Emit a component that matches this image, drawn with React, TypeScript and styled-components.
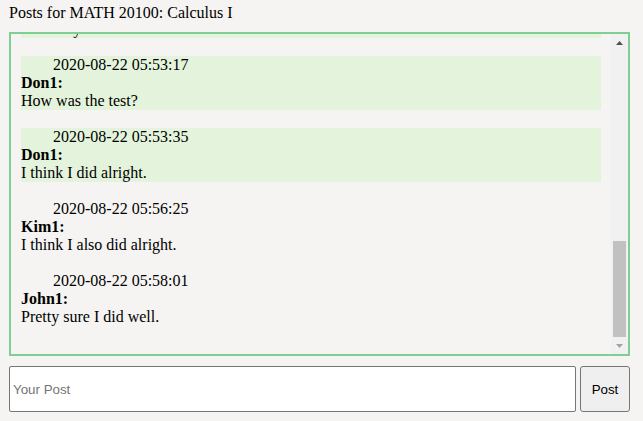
import React, { useLayoutEffect, useRef } from "react";
import styled, { createGlobalStyle } from "styled-components";

const Global = createGlobalStyle`
  html, body { margin: 0; padding: 0; background: #f5f4f2; }
  body { font-family: "Liberation Serif", "Times New Roman", serif; font-size: 16px; color: #000; }
`;

const Page = styled.div`
  box-sizing: border-box;
  width: 643px;
  height: 421px;
  padding: 4px 13px 0 9px;
  display: flex;
  flex-direction: column;
`;

const Title = styled.div`
  line-height: 18px;
  height: 18px;
  margin-bottom: 10px;
`;

const Frame = styled.div`
  box-sizing: border-box;
  height: 324px;
  border: 2px solid #7dcf95;
  display: flex;
`;

const Viewport = styled.div`
  box-sizing: border-box;
  flex: 1;
  min-width: 0;
  padding: 10px 0 10px 10px;
  overflow: hidden;
`;

const ScrollBar = styled.div`
  width: 17px;
  flex: none;
  background: #f1f1f1;
  display: flex;
  flex-direction: column;
`;

const Arrow = styled.div`
  height: 17px;
  flex: none;
  display: flex;
  align-items: center;
  justify-content: center;
`;

const Track = styled.div`
  flex: 1;
  display: flex;
  flex-direction: column;
  justify-content: flex-end;
  padding: 0 2px;
`;

const Thumb = styled.div`
  height: 96px;
  background: #c1c1c1;
`;

const Post = styled.div<{ $mine: boolean }>`
  background: ${(p) => (p.$mine ? "#e4f4dc" : "transparent")};
  margin-right: 10px;
  margin-bottom: 18px;
  line-height: 18px;
`;

const Stamp = styled.div`
  padding-left: 32px;
`;

const Author = styled.div`
  font-weight: bold;
`;

const Body = styled.div``;

const Composer = styled.div`
  display: flex;
  gap: 4px;
  margin-top: 10px;
  height: 46px;
`;

const Input = styled.input`
  box-sizing: border-box;
  flex: 1;
  height: 46px;
  border: 1px solid #767676;
  border-radius: 2px;
  background: #fff;
  padding: 0 3px;
  font-family: "Liberation Sans", Arial, sans-serif;
  font-size: 13.33px;
  &::placeholder { color: #757575; }
`;

const Button = styled.button`
  box-sizing: border-box;
  width: 50px;
  height: 46px;
  border: 1px solid #767676;
  border-radius: 3px;
  background: #efefef;
  font-family: "Liberation Sans", Arial, sans-serif;
  font-size: 13.33px;
  color: #000;
  padding: 0;
`;

const posts = [
  { t: "2020-08-22 05:40:02", a: "John1", b: "Hi everyone!", mine: false },
  { t: "2020-08-22 05:41:15", a: "Don1", b: "Hello!", mine: true },
  { t: "2020-08-22 05:42:30", a: "Kim1", b: "Hey guys.", mine: false },
  { t: "2020-08-22 05:43:48", a: "John1", b: "Did everyone finish the homework?", mine: false },
  { t: "2020-08-22 05:44:20", a: "Don1", b: "Yes, just finished it.", mine: true },
  { t: "2020-08-22 05:45:05", a: "Kim1", b: "Me too.", mine: false },
  { t: "2020-08-22 05:47:41", a: "John1", b: "The test is today.", mine: false },
  { t: "2020-08-22 05:49:12", a: "Kim1", b: "Good luck everyone!", mine: false },
  { t: "2020-08-22 05:52:09", a: "Don1", b: "I'm ready", mine: true },
  { t: "2020-08-22 05:53:17", a: "Don1", b: "How was the test?", mine: true },
  { t: "2020-08-22 05:53:35", a: "Don1", b: "I think I did alright.", mine: true },
  { t: "2020-08-22 05:56:25", a: "Kim1", b: "I think I also did alright.", mine: false },
  { t: "2020-08-22 05:58:01", a: "John1", b: "Pretty sure I did well.", mine: false },
];

export default function App() {
  const ref = useRef<HTMLDivElement>(null);
  useLayoutEffect(() => {
    if (ref.current) ref.current.scrollTop = ref.current.scrollHeight;
  }, []);
  return (
    <>
      <Global />
      <Page>
        <Title>Posts for MATH 20100: Calculus I</Title>
        <Frame>
          <Viewport ref={ref}>
            {posts.map((p, i) => (
              <Post key={i} $mine={p.mine}>
                <Stamp>{p.t}</Stamp>
                <Author>{p.a}:</Author>
                <Body>{p.b}</Body>
              </Post>
            ))}
          </Viewport>
          <ScrollBar>
            <Arrow>
              <svg width="7" height="4" viewBox="0 0 7 4">
                <path d="M0 4 L3.5 0 L7 4 Z" fill="#505050" />
              </svg>
            </Arrow>
            <Track>
              <Thumb />
            </Track>
            <Arrow>
              <svg width="7" height="4" viewBox="0 0 7 4">
                <path d="M0 0 L7 0 L3.5 4 Z" fill="#a3a3a3" />
              </svg>
            </Arrow>
          </ScrollBar>
        </Frame>
        <Composer>
          <Input placeholder="Your Post" />
          <Button>Post</Button>
        </Composer>
      </Page>
    </>
  );
}
